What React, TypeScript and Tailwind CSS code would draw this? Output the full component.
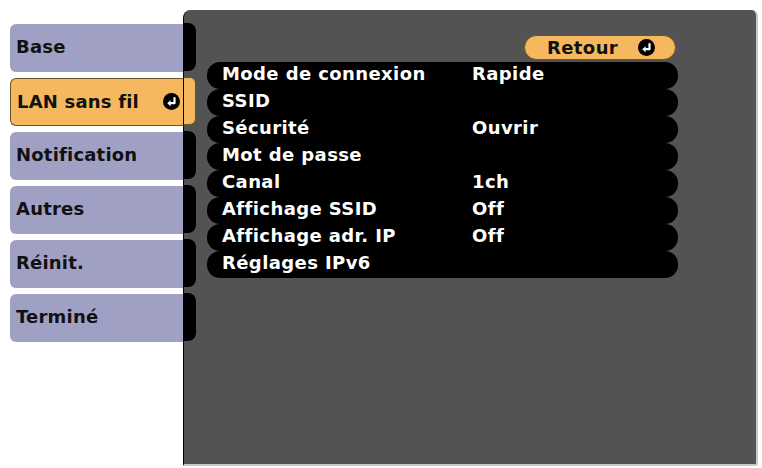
import React from 'react';

const tabs = ['Base', 'LAN sans fil', 'Notification', 'Autres', 'Réinit.', 'Terminé'];
const selectedTab = 1;

const rows: { label: string; value?: string }[] = [
  { label: 'Mode de connexion', value: 'Rapide' },
  { label: 'SSID' },
  { label: 'Sécurité', value: 'Ouvrir' },
  { label: 'Mot de passe' },
  { label: 'Canal', value: '1ch' },
  { label: 'Affichage SSID', value: 'Off' },
  { label: 'Affichage adr. IP', value: 'Off' },
  { label: 'Réglages IPv6' },
];

function EnterIcon() {
  return (
    <svg width="17" height="17" viewBox="0 0 17 17" className="shrink-0">
      <circle cx="8.5" cy="8.5" r="8.5" fill="#000" />
      <path d="M11.5 4.2 V10.2 H6.8" fill="none" stroke="#fff" strokeWidth="2.2" strokeLinejoin="round" />
      <path d="M4.2 10.2 L7.6 7.2 V13.2 Z" fill="#fff" />
    </svg>
  );
}

export default function App() {
  return (
    <div
      className="w-[762px] h-[468px] bg-white flex items-start overflow-hidden"
      style={{ fontFamily: '"DejaVu Sans", "Liberation Sans", sans-serif' }}
    >
      {/* left tabs */}
      <div className="flex flex-col gap-[6px] pt-[24px] pl-[10px] w-[183px] shrink-0">
        {tabs.map((t, i) =>
          i === selectedTab ? (
            <div
              key={t}
              className="h-[48px] flex items-center justify-between pl-[6px] pr-[3px] pb-[2px] bg-[#f6b85e] border border-r-0 border-[#6b5428] rounded-l-[6px] text-[18px] font-bold text-[#111] tracking-[0.2px]"
            >
              <span>{t}</span>
              <EnterIcon />
            </div>
          ) : (
            <div
              key={t}
              className="h-[48px] flex items-center pl-[6px] pb-[3px] bg-[#9fa0c3] rounded-l-[6px] text-[18px] font-bold text-[#111] tracking-[0.2px]"
            >
              {t}
            </div>
          )
        )}
      </div>

      {/* panel */}
      <div className="mt-[10px] w-[575px] h-[456px] shrink-0 flex bg-[#535353] rounded-tl-[8px] rounded-tr-[6px] rounded-br-[3px] border-l border-l-black border-r-2 border-b-2 border-r-[#c9c9c9] border-b-[#c9c9c9]">
        <div className="flex flex-col gap-[6px] pt-[13px] w-[12px] shrink-0">
          {tabs.map((t, i) =>
            i === selectedTab ? (
              <div key={t} className="h-[48px] bg-[#f6b85e] border border-l-0 border-[#6b5428] rounded-r-[6px]" />
            ) : (
              <div key={t} className="h-[48px] bg-black rounded-r-[8px]" />
            )
          )}
        </div>

        <div className="flex flex-col w-[471px] ml-[11px] pt-[25px]">
          <div className="self-end mr-[2px] h-[25px] w-[152px] flex items-center pl-[22px] pr-[20px] justify-between bg-[#f6b85e] border border-[#6b5428] rounded-full text-[18px] font-bold text-[#111] tracking-[0.4px]">
            <span>Retour</span>
            <EnterIcon />
          </div>
          <div className="flex flex-col mt-[2px]">
            {rows.map((r) => (
              <div
                key={r.label}
                className="h-[27px] flex items-center bg-black rounded-[13px] pl-[15px] pb-[3px] text-white text-[18px] font-bold tracking-[0.4px] leading-none"
              >
                <span className="w-[250px] shrink-0">{r.label}</span>
                {r.value && <span>{r.value}</span>}
              </div>
            ))}
          </div>
        </div>
      </div>
    </div>
  );
}
